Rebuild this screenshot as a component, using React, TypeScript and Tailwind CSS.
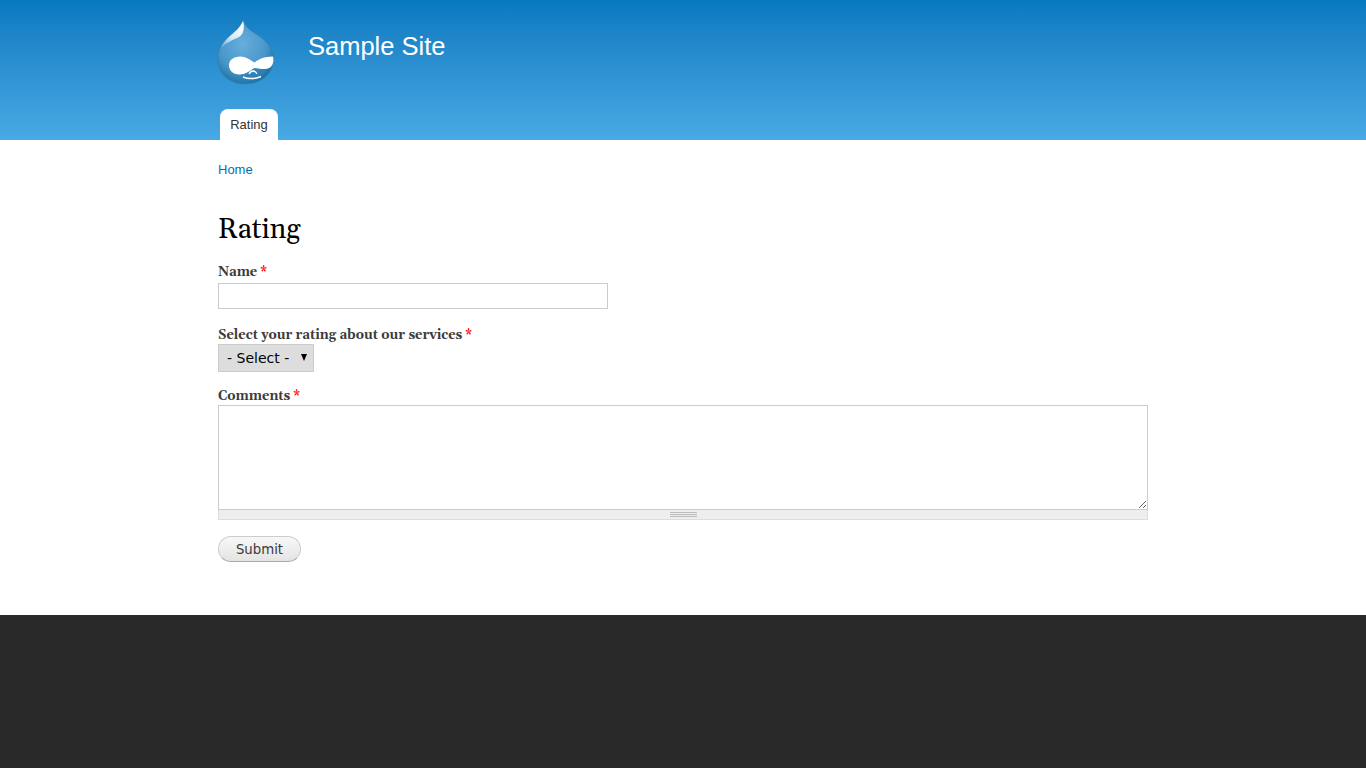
import { ReactNode } from 'react';

const serif = "font-['Georgia','Gelasio','Liberation_Serif',serif]";

function DrupalLogo() {
    return (
        <svg width="60" height="68" viewBox="0 0 60 68" className="block">
            <defs>
                <radialGradient id="drop" cx="45%" cy="38%" r="62%">
                    <stop offset="0%" stopColor="#66aedc" />
                    <stop offset="70%" stopColor="#4896c9" />
                    <stop offset="100%" stopColor="#2274a6" />
                </radialGradient>
                <linearGradient id="shine" x1="0.7" y1="0" x2="0.1" y2="1">
                    <stop offset="0%" stopColor="#ffffff" />
                    <stop offset="55%" stopColor="#ffffff" stopOpacity="0.75" />
                    <stop offset="100%" stopColor="#ffffff" stopOpacity="0.12" />
                </linearGradient>
            </defs>
            <path
                d="M27.5 1.5 C28 8 34 12 40 16 C50 22 57.5 30 57.5 41 C57.5 56 45 66 29 66 C13 66 1.5 55 1.5 41 C1.5 29 10 21 17 16 C22 13 26 8 27.5 1.5 Z"
                fill="url(#drop)"
                stroke="#2f7fae"
                strokeWidth="0.6"
            />
            <path
                d="M27 3 C25 8 20 13 15 17 C10 21 6 26 4 31 C9 25 17 22 23 19 C27 17 29 11 27 3 Z"
                fill="url(#shine)"
            />
            <path d="M24 56 C29 64 38 64 46 58 C49 55 50 53 51 50 L38 47 Z" fill="#2f7fb2" opacity="0.6" />
            <path
                d="M13 47 C13 42 18 38.5 24 38.5 C30 38.5 34 42 38.5 44.5 C41 42.5 44 40.5 48 39.5 C51 39 54 38.5 57 38.5 C58.5 45 56 51 49 51 C45 51 42 50.5 38.5 50 C35 51.5 31 56.5 23.5 56.5 C17 56.5 13 52.5 13 47 Z"
                fill="#ffffff"
            />
            <path d="M27 59 C32 61 39 61 45 58.5" fill="none" stroke="#ffffff" strokeWidth="1.5" />
            <path d="M33 56 C35 52 39 52 41 56" fill="none" stroke="#ffffff" strokeWidth="1.3" />
        </svg>
    );
}

function Field({ label, children }: { label: string; children: ReactNode }) {
    return (
        <div>
            <label className={`block text-[13px] leading-[18px] font-bold text-[#3b3b3b] ${serif}`}>
                {label} <span className="text-[#ff0000]">*</span>
            </label>
            {children}
        </div>
    );
}

export default function App() {
    return (
        <div className="min-h-[768px] bg-white font-['Liberation_Sans',sans-serif] flex flex-col">
            <header className="h-[140px] bg-gradient-to-b from-[#0779bf] to-[#48a9e4]">
                <div className="w-[930px] ml-[218px] h-full flex flex-col">
                    <div className="h-[109px] flex items-start">
                        <div className="mt-[18px] -ml-[2px]">
                            <DrupalLogo />
                        </div>
                        <div className="ml-[32px] mt-[30px] text-[25.5px] leading-[32px] text-white">Sample Site</div>
                    </div>
                    <nav className="flex pl-[2px]">
                        <a className="h-[31px] w-[58px] bg-white rounded-t-[8px] text-[13px] leading-[31px] text-center text-[#333333]">
                            Rating
                        </a>
                    </nav>
                </div>
            </header>

            <main className="w-[930px] ml-[218px] h-[475px] pt-[22px]">
                <a className="block text-[13px] leading-[15px] text-[#0071b3]">Home</a>
                <h1 className={`mt-[35px] text-[28px] leading-[36px] font-normal text-black ${serif}`}>Rating</h1>
                <form className="mt-[15px] flex flex-col">
                    <Field label="Name">
                        <input type="text" className="block w-[390px] h-[26px] mt-[2px] border border-[#cccccc] bg-white" />
                    </Field>
                    <div className="mt-[17px]">
                        <Field label="Select your rating about our services">
                            <div className="relative w-[96px]">
                                <select className="block appearance-none w-[96px] h-[28px] border border-[#cccccc] bg-[#dddddd] pl-[8px] text-[14px] text-black font-['DejaVu_Sans',sans-serif]">
                                    <option>- Select -</option>
                                </select>
                                <svg width="6" height="7" viewBox="0 0 6 7" className="absolute left-[83px] top-[10px]">
                                    <path d="M0 0 H6 L3 7 Z" fill="#000000" />
                                </svg>
                            </div>
                        </Field>
                    </div>
                    <div className="mt-[15px]">
                        <Field label="Comments">
                            <textarea className="block w-[930px] h-[105px] border border-[#cccccc] bg-white" />
                            <div className="h-[10px] bg-[#eeeeee] border border-t-0 border-[#dddddd] flex justify-center">
                                <div className="w-[27px] h-[5px] mt-[2px] ml-px border-y border-[#bbbbbb] flex items-center">
                                    <div className="w-full h-px bg-[#bbbbbb]" />
                                </div>
                            </div>
                        </Field>
                    </div>
                    <div className="mt-[16px]">
                        <button
                            type="button"
                            className="w-[83px] h-[26px] pt-px rounded-[20px] border border-[#cccccc] border-b-[#aaaaaa] bg-gradient-to-b from-[#f8f8f8] to-[#e4e4e4] text-[13.3px] text-[#3a3a3a] font-['DejaVu_Sans',sans-serif]"
                        >
                            Submit
                        </button>
                    </div>
                </form>
            </main>

            <footer className="flex-1 bg-[#292929]" />
        </div>
    );
}
